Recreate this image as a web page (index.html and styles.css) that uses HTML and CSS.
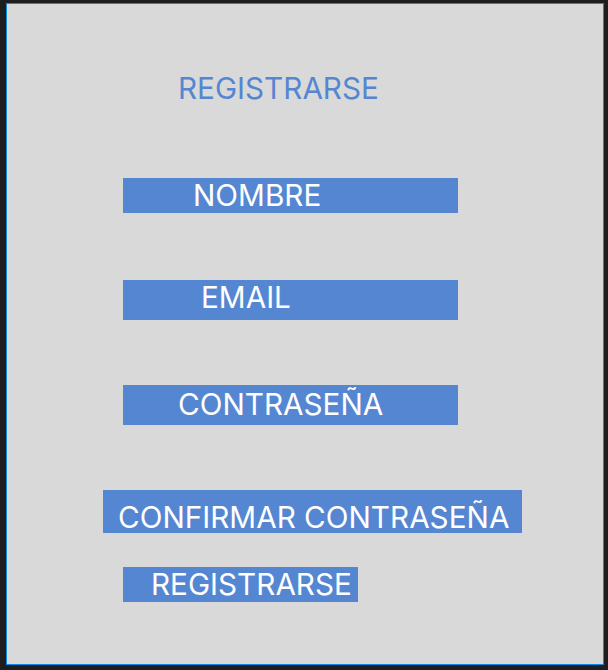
FILE: index.html
```html
<!DOCTYPE html>
<html lang="es">
<head>
<meta charset="utf-8">
<title>Registrarse</title>
<link rel="stylesheet" href="styles.css">
</head>
<body>
<div class="frame">
  <h1 class="title">REGISTRARSE</h1>
  <div class="field field-nombre"><span class="label label-nombre">NOMBRE</span></div>
  <div class="field field-email"><span class="label label-email">EMAIL</span></div>
  <div class="field field-pass"><span class="label label-pass">CONTRASEÑA</span></div>
  <div class="field field-confirm"><span class="label label-confirm">CONFIRMAR CONTRASEÑA</span></div>
  <button class="btn" type="button">REGISTRARSE</button>
</div>
</body>
</html>
```
FILE: styles.css
```css
html, body {
  margin: 0;
  padding: 0;
  background: #1e1e1e;
  width: 608px;
  height: 670px;
  overflow: hidden;
}
body {
  font-family: Inter, "Noto Sans", sans-serif;
}
.frame {
  box-sizing: border-box;
  margin: 3px 0 0 6px;
  width: 598px;
  height: 662px;
  border: 1px solid #0c8ce9;
  background: #d9d9d9;
  display: flex;
  flex-direction: column;
  align-items: flex-start;
}
.title {
  margin: 67px 0 0 171px;
  font-size: 29.7px;
  line-height: 34px;
  font-weight: 400;
  color: #5586d2;
  white-space: nowrap;
}
.field, .btn {
  box-sizing: border-box;
  background: #5586d2;
  color: #ffffff;
  font-size: 29.7px;
  line-height: 34px;
  display: flex;
  align-items: flex-start;
  white-space: nowrap;
}
.field {
  width: 335px;
  margin-left: 116px;
}
.field-nombre { margin-top: 73px; height: 35px; padding-left: 70px; }
.field-email { margin-top: 67px; height: 40px; padding-left: 78px; }
.field-pass { margin-top: 65px; height: 40px; padding-top: 2px; padding-left: 55px; }
.field-confirm {
  margin-top: 65px;
  margin-left: 96px;
  width: 419px;
  height: 43px;
  padding-top: 10px;
  padding-left: 15px;
}
.btn {
  margin: 34px 0 0 116px;
  width: 235px;
  height: 35px;
  padding: 0 0 0 28px;
  border: none;
  font-family: Inter, "Noto Sans", sans-serif;
}
```
